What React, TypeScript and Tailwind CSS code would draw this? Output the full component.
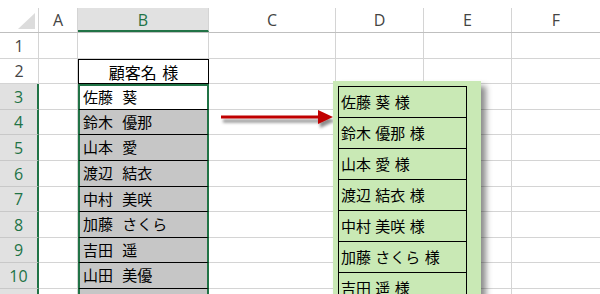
import React from "react";

const GRID = "border-[#d4d4d4]";

const cols = [
  { key: "A", w: "w-[39px]" },
  { key: "B", w: "w-[131px]" },
  { key: "C", w: "w-[127px]" },
  { key: "D", w: "w-[88px]" },
  { key: "E", w: "w-[88px]" },
];

const rowHeights = [
  "h-[26px]",
  "h-[25px]",
  "h-[26px]",
  "h-[25px]",
  "h-[26px]",
  "h-[26px]",
  "h-[25px]",
  "h-[26px]",
  "h-[25px]",
  "h-[26px]",
  "h-[26px]",
];

const names = [
  "佐藤 葵",
  "鈴木 優那",
  "山本 愛",
  "渡辺 結衣",
  "中村 美咲",
  "加藤 さくら",
  "吉田 遥",
  "山田 美優",
];

const jp = "font-['Noto_Sans_CJK_JP',sans-serif]";
const hdr = "font-['Open_Sans','Liberation_Sans',sans-serif]";

function ColumnHeader() {
  return (
    <div className="flex h-[25px] border-b border-[#bfbfbf]">
      <div className={`w-[39px] shrink-0 border-r ${GRID}`}>
        {/* select-all corner triangle */}
        <svg width="38" height="24">
          <polygon points="18,21 35,21 35,5" fill="#dcdcdc" />
        </svg>
      </div>
      {cols.map((c) => (
        <div
          key={c.key}
          className={`${c.w} shrink-0 flex items-center justify-center text-[16px] border-r ${GRID} ${
            c.key === "B"
              ? "bg-[#e1e1e1] text-[#217346] border-b-2 border-b-[#217346] pt-[2px]"
              : "text-[#444]"
          }`}
        >
          {c.key}
        </div>
      ))}
      <div className="flex-1 flex items-center justify-center text-[16px] text-[#444]">
        F
      </div>
    </div>
  );
}

function BCell({ row }: { row: number }) {
  if (row === 1) return <div className={`w-[131px] shrink-0 border-r border-b ${GRID}`} />;
  if (row === 2)
    return (
      <div className={`w-[131px] shrink-0 border border-black flex items-center justify-center text-[16px] text-black [word-spacing:2px] ${jp}`}>
        顧客名 様
      </div>
    );
  const name = names[row - 3];
  return (
    <div
      className={`w-[131px] shrink-0 border-x-2 border-x-[#217346] border-b border-b-black flex items-center pl-[3px] text-[15px] text-black [word-spacing:6px] ${jp} ${
        row === 3 ? "bg-white border-t-2 border-t-[#217346]" : "bg-[#c6c6c6]"
      }`}
    >
      {name}
    </div>
  );
}

function SheetRow({ row }: { row: number }) {
  const selected = row >= 3;
  return (
    <div className={`flex ${rowHeights[row - 1]}`}>
      <div
        className={`w-[39px] shrink-0 flex items-center justify-center text-[16px] border-b ${
          selected
            ? "bg-[#e1e1e1] text-[#217346] border-r-2 border-r-[#217346] border-b-[#c8c8c8]"
            : "text-[#444] border-r border-[#d4d4d4]"
        }`}
      >
        {row <= 10 ? row : null}
      </div>
      <div className={`w-[39px] shrink-0 border-r border-b ${GRID}`} />
      <BCell row={row} />
      <div className={`w-[127px] shrink-0 border-r border-b ${GRID}`} />
      <div className={`w-[88px] shrink-0 border-r border-b ${GRID}`} />
      <div className={`w-[88px] shrink-0 border-r border-b ${GRID}`} />
      <div className={`flex-1 border-b ${GRID}`} />
    </div>
  );
}

export default function App() {
  return (
    <div className={`relative w-[600px] h-[294px] overflow-hidden bg-white pt-[8px] ${hdr}`}>
      <ColumnHeader />
      {rowHeights.map((_, i) => (
        <SheetRow key={i} row={i + 1} />
      ))}

      {/* red arrow */}
      <svg className="absolute left-[214px] top-[104px]" width="126" height="30">
        <defs>
          <filter id="arrowShadow" x="-10%" y="-50%" width="130%" height="220%">
            <feDropShadow dx="2" dy="4" stdDeviation="1.5" floodColor="#000" floodOpacity="0.45" />
          </filter>
        </defs>
        <g filter="url(#arrowShadow)">
          <rect x="7" y="11.5" width="100" height="3" fill="#c00000" />
          <polygon points="104,6 119,13 104,20" fill="#c00000" />
        </g>
      </svg>

      {/* floating text box with the joined names */}
      <div className="absolute left-[333px] top-[81px] w-[148px] h-[240px] bg-[#c9e9b5] shadow-[5px_5px_6px_rgba(0,0,0,0.45)] pl-[5px] pt-[5px]">
        <div className="w-[129px] border border-black">
          {names.slice(0, 7).map((n) => (
            <div
              key={n}
              className={`h-[31px] border-b border-black flex items-center pl-[2px] text-[15px] text-black [word-spacing:1px] ${jp}`}
            >
              {n} 様
            </div>
          ))}
        </div>
      </div>
    </div>
  );
}
